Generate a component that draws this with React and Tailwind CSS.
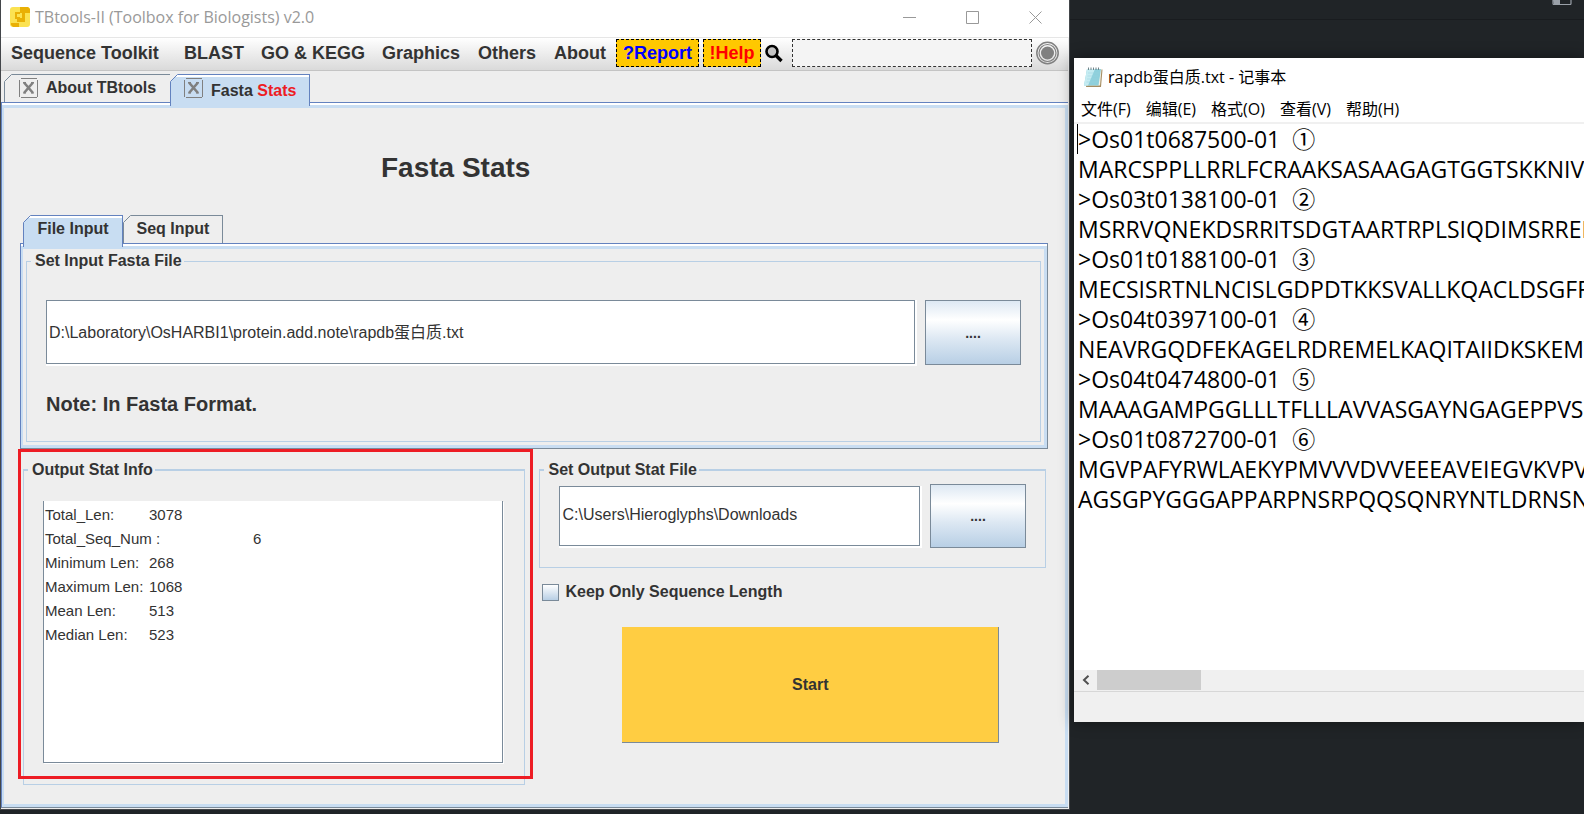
import React, { useState } from "react";

const ARIAL = "font-['Liberation_Sans','Noto_Sans_CJK_SC',sans-serif]";
const UI = "font-['Open_Sans','Noto_Sans_CJK_SC',sans-serif]";

const MENUS = [
  { label: "Sequence Toolkit", width: "w-[173px]" },
  { label: "BLAST", width: "w-[77px]" },
  { label: "GO & KEGG", width: "w-[121px]" },
  { label: "Graphics", width: "w-[96px]" },
  { label: "Others", width: "w-[76px]" },
  { label: "About", width: "w-[62px]" },
];

const STATS = [
  "Total_Len:\t3078",
  "Total_Seq_Num :\t6",
  "Minimum Len:\t268",
  "Maximum Len:\t1068",
  "Mean Len:\t513",
  "Median Len:\t523",
].join("\n");

const FASTA = [
  ">Os01t0687500-01  ①",
  "MARCSPPLLRRLFCRAAKSASAAGAGTGGTSKKNIVKRL",
  ">Os03t0138100-01  ②",
  "MSRRVQNEKDSRRITSDGTAARTRPLSIQDIMSRREKKA",
  ">Os01t0188100-01  ③",
  "MECSISRTNLNCISLGDPDTKKSVALLKQACLDSGFFYV",
  ">Os04t0397100-01  ④",
  "NEAVRGQDFEKAGELRDREMELKAQITAIIDKSKEMVKA",
  ">Os04t0474800-01  ⑤",
  "MAAAGAMPGGLLLTFLLLAVVASGAYNGAGEPPVSRRSW",
  ">Os01t0872700-01  ⑥",
  "MGVPAFYRWLAEKYPMVVVDVVEEEAVEIEGVKVPVDTS",
  "AGSGPYGGGAPPARPNSRPQQSQNRYNTLDRNSNPSRAP",
].join("\n");

function Logo() {
  return (
    <svg width="20" height="20" viewBox="0 0 20 20" aria-hidden="true">
      <rect width="20" height="20" rx="3" fill="#fbe251" />
      <path d="M5 5h5v2H7v3h3v5H0V15h7v-3H5z" fill="#e9b006" />
      <path d="M10 0h8l2 2v4h-5v9h-5v-4h2V6h-2z" fill="#e9b006" />
      <path d="M1 16h8v4H3l-2-2z" fill="#e9b006" />
    </svg>
  );
}

function NotepadIcon() {
  return (
    <svg width="20" height="21" viewBox="0 0 20 21" aria-hidden="true">
      <path d="M5 2.5h14.5L18 20H3z" fill="#a58d62" />
      <path d="M5 2h13.5L17 18.5H3z" fill="#f4f1e4" />
      <path d="M4 2h14l-2.500 16.500H1z" fill="#8ed0dc" />
      <path d="M4 2h8L5 18.500H1z" fill="#c6ecf2" />
      <path d="M5 6h11M4.500 9h11M4 12h11M3.500 15h11" stroke="#9bd3dd" strokeWidth=".5" />
      <path d="M5.500 .5v2.500M8 .5v2.500M10.500 .5v2.500M13 .5v2.500M15.500 .5v2.500" stroke="#6f8288" strokeWidth="1" />
    </svg>
  );
}

function CloseBox() {
  return (
    <svg width="19" height="20" viewBox="0 0 19 20" aria-hidden="true">
      <path d="M1.500 .5h16M1.500 19.500h16M.5 1.500v17M18.500 1.500v17" stroke="#808080" fill="none" shapeRendering="crispEdges" />
      <path d="M5 4.500l9 10.500M14 4.500L5 15" stroke="#808080" strokeWidth="2.600" />
      <path d="M4 4.500h3M12 4.500h3M4 15h3M12 15h3" stroke="#808080" />
    </svg>
  );
}

function TabNotch({ outside, stroke }) {
  return (
    <svg className="absolute -left-px -top-px" width="8" height="8" viewBox="0 0 8 8" aria-hidden="true">
      <path d="M0 0h8L0 8z" fill={outside} />
      <path d="M.5 7.500 7.500 .5" stroke={stroke} />
    </svg>
  );
}

function Tab({ active, className, children, onClick }) {
  return (
    <button
      type="button"
      role="tab"
      aria-selected={active}
      onClick={onClick}
      className={
        "relative flex border border-b-0 text-[16px] leading-5 font-bold text-[#333] " +
        (active
          ? "z-10 -mb-[4px] h-[32px] border-[#6382bf] bg-[#c8ddf2] "
          : "h-[28px] border-[#7a8a99] bg-[#eee] ") +
        className
      }
    >
      {active && <span className="absolute top-0 right-0 left-0 h-[2px] bg-white" />}
      <TabNotch outside="#eeeeee" stroke={active ? "#6382bf" : "#7a8a99"} />
      {children}
    </button>
  );
}

function Group({ title, className, children }) {
  return (
    <fieldset className={"min-w-0 border border-[#b8cfe5] " + className}>
      <legend className="-ml-[15px] pr-[2px] pl-1 text-[16px] leading-5 font-bold">{title}</legend>
      {children}
    </fieldset>
  );
}

function BrowseButton({ label, className }) {
  return (
    <button
      type="button"
      aria-label={label}
      className={
        "shrink-0 border border-[#7a8a99] bg-[linear-gradient(#dde8f3,#fff_30%,#dde8f3_60%,#b8cfe5)] text-[14px] leading-5 font-bold text-[#333] " +
        className
      }
    >
      ....
    </button>
  );
}

const FIELD =
  "min-w-0 flex-1 border border-[#7a8a99] bg-white px-[2px] pb-[2px] text-[16px] text-[#333] shadow-[1px_1px_0_1px_#fff] outline-none";

function ToolWindow() {
  const [tab, setTab] = useState("file");
  const [input, setInput] = useState("D:\\Laboratory\\OsHARBI1\\protein.add.note\\rapdb蛋白质.txt");
  const [output, setOutput] = useState("C:\\Users\\Hieroglyphs\\Downloads");

  return (
    <main className={"self-start border-x border-b border-[#43464a] bg-[#eee] pr-px pb-px text-[#333] " + ARIAL}>
      <header className={"-mr-px flex h-[37px] items-center bg-white pr-[2px] pb-[3px] pl-[9px] " + UI}>
        <Logo />
        <h1 className="ml-[5px] flex-1 text-[16px] leading-6 text-[#999]">TBtools-II (Toolbox for Biologists) v2.0</h1>
        <div className="flex h-full text-[#999]">
          {[
            ["Minimize", "M0 6.500h13"],
            ["Maximize", "M.5 .5h12v12H.5z"],
            ["Close", "M.5 .5l12 12M12.500 .5l-12 12"],
          ].map(([name, d]) => (
            <button key={name} type="button" aria-label={name} className="grid w-[63px] place-items-center">
              <svg width="13" height="13" viewBox="0 0 13 13" fill="none" stroke="currentColor">
                <path d={d} />
              </svg>
            </button>
          ))}
        </div>
      </header>

      <nav className="flex h-[34px] items-center border-t border-b border-t-[#e6e6e6] border-b-[#c4c4c4] bg-linear-to-b from-white to-[#dadada] pr-[9px] pb-[2px] pl-[10px] text-[18px] leading-5 font-bold">
        {MENUS.map((m) => (
          <button key={m.label} type="button" className={"shrink-0 text-left whitespace-nowrap " + m.width}>
            {m.label}
          </button>
        ))}
        <button type="button" className="h-7 w-[83px] shrink-0 border border-dashed border-black bg-[#ffc800] text-[#00f]">
          ?Report
        </button>
        <button type="button" className="ml-1 h-7 w-[58px] shrink-0 border border-dashed border-black bg-[#ffc800] text-[#f00]">
          !Help
        </button>
        <svg className="ml-1 shrink-0" width="18" height="19" viewBox="0 0 18 19" aria-hidden="true">
          <circle cx="7" cy="7.500" r="5.500" fill="#c4c4c4" stroke="#000" strokeWidth="2.600" />
          <path d="M11 11.500l5.500 5.500" stroke="#000" strokeWidth="3.400" />
        </svg>
        <input
          type="text"
          aria-label="Search functions"
          className="ml-[9px] h-7 min-w-0 flex-1 border border-dashed border-[#333] bg-[#f4f4f4] px-1 text-[15px] outline-none"
        />
        <button type="button" aria-label="Status" className="ml-1 shrink-0">
          <svg width="23" height="24" viewBox="0 0 23 24" fill="none" stroke="#808080">
            <circle cx="11.500" cy="12" r="10.700" strokeWidth="1.500" />
            <circle cx="11.500" cy="12" r="8.500" strokeWidth="1.200" />
            <circle cx="11.500" cy="12" r="6.500" fill="#808080" stroke="none" />
          </svg>
        </button>
      </nav>

      <div role="tablist" className="mt-[3px] flex pl-[3px]">
        <Tab className="w-[166px] border-r-0 pt-[3px] pl-[14px]">
          <CloseBox />
          <span className="ml-2">About TBtools</span>
        </Tab>
        <Tab active className="w-[140px] pt-[3px] pl-[13px]">
          <CloseBox />
          <span className="mt-[3px] ml-2">
            Fasta <span className="text-[#ed1c24]">Stats</span>
          </span>
        </Tab>
      </div>

      <div className="border-t border-b border-l border-t-[#6382bf] border-b-[#7a8a99] border-l-[#6382bf]">
        <div className="border-t-2 border-white">
          <div className="border-t-3 border-r-3 border-b-3 border-l-2 border-[#c8ddf2] pt-[44px] pr-[17px] pb-[19px] pl-[16px]">
            <h2 className="pl-[361px] text-[28px] leading-8 font-bold">Fasta Stats</h2>

            <div role="tablist" className="mt-[31px] flex pl-[3px]">
              <Tab active={tab === "file"} onClick={() => setTab("file")} className="w-[100px] justify-center pt-[3px]">
                File Input
              </Tab>
              <Tab active={tab === "seq"} onClick={() => setTab("seq")} className="w-[100px] justify-center pt-[3px]">
                Seq Input
              </Tab>
            </div>

            <div className="border border-t-[#6382bf] border-r-[#7a8a99] border-b-[#7a8a99] border-l-[#6382bf]">
              <div className="border-t-2 border-white">
                <div className="border-t-3 border-r-3 border-b-3 border-l-2 border-[#c8ddf2] pt-[2px] pr-[3px] pb-[3px] pl-[3px]">
                  <Group title="Set Input Fasta File" className="px-[19px] pb-[25px]">
                    <div className="mt-[29px] flex gap-[10px]">
                      <input
                        type="text"
                        aria-label="Input Fasta file"
                        value={input}
                        onChange={(e) => setInput(e.target.value)}
                        className={"h-16 " + FIELD}
                      />
                      <BrowseButton label="Browse input file" className="h-[65px] w-[96px]" />
                    </div>
                    <p className="mt-[27px] text-[20px] leading-6 font-bold">Note: In Fasta Format.</p>
                  </Group>
                </div>
              </div>
            </div>

            <div className="mt-[11px] grid grid-cols-[502fr_506fr] gap-[14px] pr-[2px] pl-[3px]">
              <div className="relative">
                <Group title="Output Stat Info" className="border-t-2 pr-[21px] pb-[21px] pl-[19px]">
                  <textarea
                    readOnly
                    aria-label="Output Stat Info"
                    value={STATS}
                    className="mt-[21px] block h-[262px] w-full resize-none overflow-hidden border border-t-0 border-[#7a8a99] bg-white px-px pt-[2px] text-[15px] leading-6 whitespace-pre [tab-size:104px] shadow-[1px_1px_0_0_#fff] outline-none"
                  />
                </Group>
                <div className="pointer-events-none absolute -top-[11px] -right-2 bottom-[6px] -left-[5px] border-3 border-[#ed1c24]" />
              </div>

              <div>
                <Group title="Set Output Stat File" className="border-t-2 px-[19px] pb-[19px]">
                  <div className="mt-1 flex items-center gap-[10px]">
                    <input
                      type="text"
                      aria-label="Output stat file"
                      value={output}
                      onChange={(e) => setOutput(e.target.value)}
                      className={"h-[60px] " + FIELD}
                    />
                    <BrowseButton label="Browse output file" className="h-16 w-[96px]" />
                  </div>
                </Group>
                <label className="mt-[14px] flex items-center gap-[6px] pl-[3px] text-[16px] leading-5 font-bold">
                  <input
                    type="checkbox"
                    className="size-[17px] appearance-none border border-[#7a8a99] bg-linear-to-b from-white to-[#b8cfe5] checked:bg-[#6382bf]"
                  />
                  Keep Only Sequence Length
                </label>
                <div className="mt-[25px] flex pr-[47px] pl-[83px]">
                  <button
                    type="button"
                    className="h-[116px] flex-1 border-r border-b border-[#7a8a99] bg-[#ffcd42] text-[16px] leading-5 font-bold"
                  >
                    Start
                  </button>
                </div>
              </div>
            </div>
          </div>
        </div>
      </div>
    </main>
  );
}

function Notepad() {
  return (
    <section className={"mt-[58px] min-w-0 self-start overflow-hidden bg-white text-black shadow-[0_0_14px_rgba(0,0,0,0.45)] " + UI}>
      <header className="flex h-[38px] items-center gap-[5px] pl-[9px] text-[16px] leading-6 whitespace-nowrap">
        <NotepadIcon />
        <h2>rapdb蛋白质.txt - 记事本</h2>
      </header>
      <nav className="flex h-[28px] items-center gap-[15px] border-b-2 border-[#f0f0f0] pl-[7px] text-[16px] leading-6 whitespace-nowrap">
        {["文件(F)", "编辑(E)", "格式(O)", "查看(V)", "帮助(H)"].map((m) => (
          <button key={m} type="button">
            {m}
          </button>
        ))}
      </nav>
      <div className="relative">
        <textarea
          readOnly
          wrap="off"
          aria-label="Document text"
          value={FASTA}
          className="block h-[546px] w-full resize-none overflow-hidden pl-[4px] text-[23px] leading-[30px] whitespace-pre outline-none"
        />
        <span className="absolute top-0 left-[3px] h-[30px] w-px bg-black" />
      </div>
      <div className="flex h-[22px] border-b border-[#d7d7d7] bg-[#f0f0f0] pb-px">
        <button type="button" aria-label="Scroll left" className="grid w-[23px] place-items-center">
          <svg width="8" height="10" viewBox="0 0 8 10" fill="none" stroke="#505050" strokeWidth="2">
            <path d="M6.500 .8 2 5l4.500 4.200" />
          </svg>
        </button>
        <div className="w-[104px] bg-[#cdcdcd]" />
      </div>
      <div className="h-[30px] bg-[#f0f0f0]" />
    </section>
  );
}

export default function App() {
  return (
    <div className="relative min-h-screen overflow-hidden bg-[#202427]">
      <div className="absolute top-[19px] right-0 left-0 h-px bg-[#191c1f]" />
      <svg className="absolute top-0 right-[12px]" width="20" height="5" viewBox="0 0 20 5" aria-hidden="true">
        <path d="M1 0v3.500q0 1 1 1h16q1 0 1-1V0" fill="none" stroke="#9aa0a8" strokeWidth="1.200" />
        <path d="M1 0h7v4.500H2z" fill="#9aa0a8" />
      </svg>
      <div className="relative grid grid-cols-[minmax(0,1070fr)_minmax(0,510fr)] gap-1">
        <ToolWindow />
        <Notepad />
      </div>
    </div>
  );
}
